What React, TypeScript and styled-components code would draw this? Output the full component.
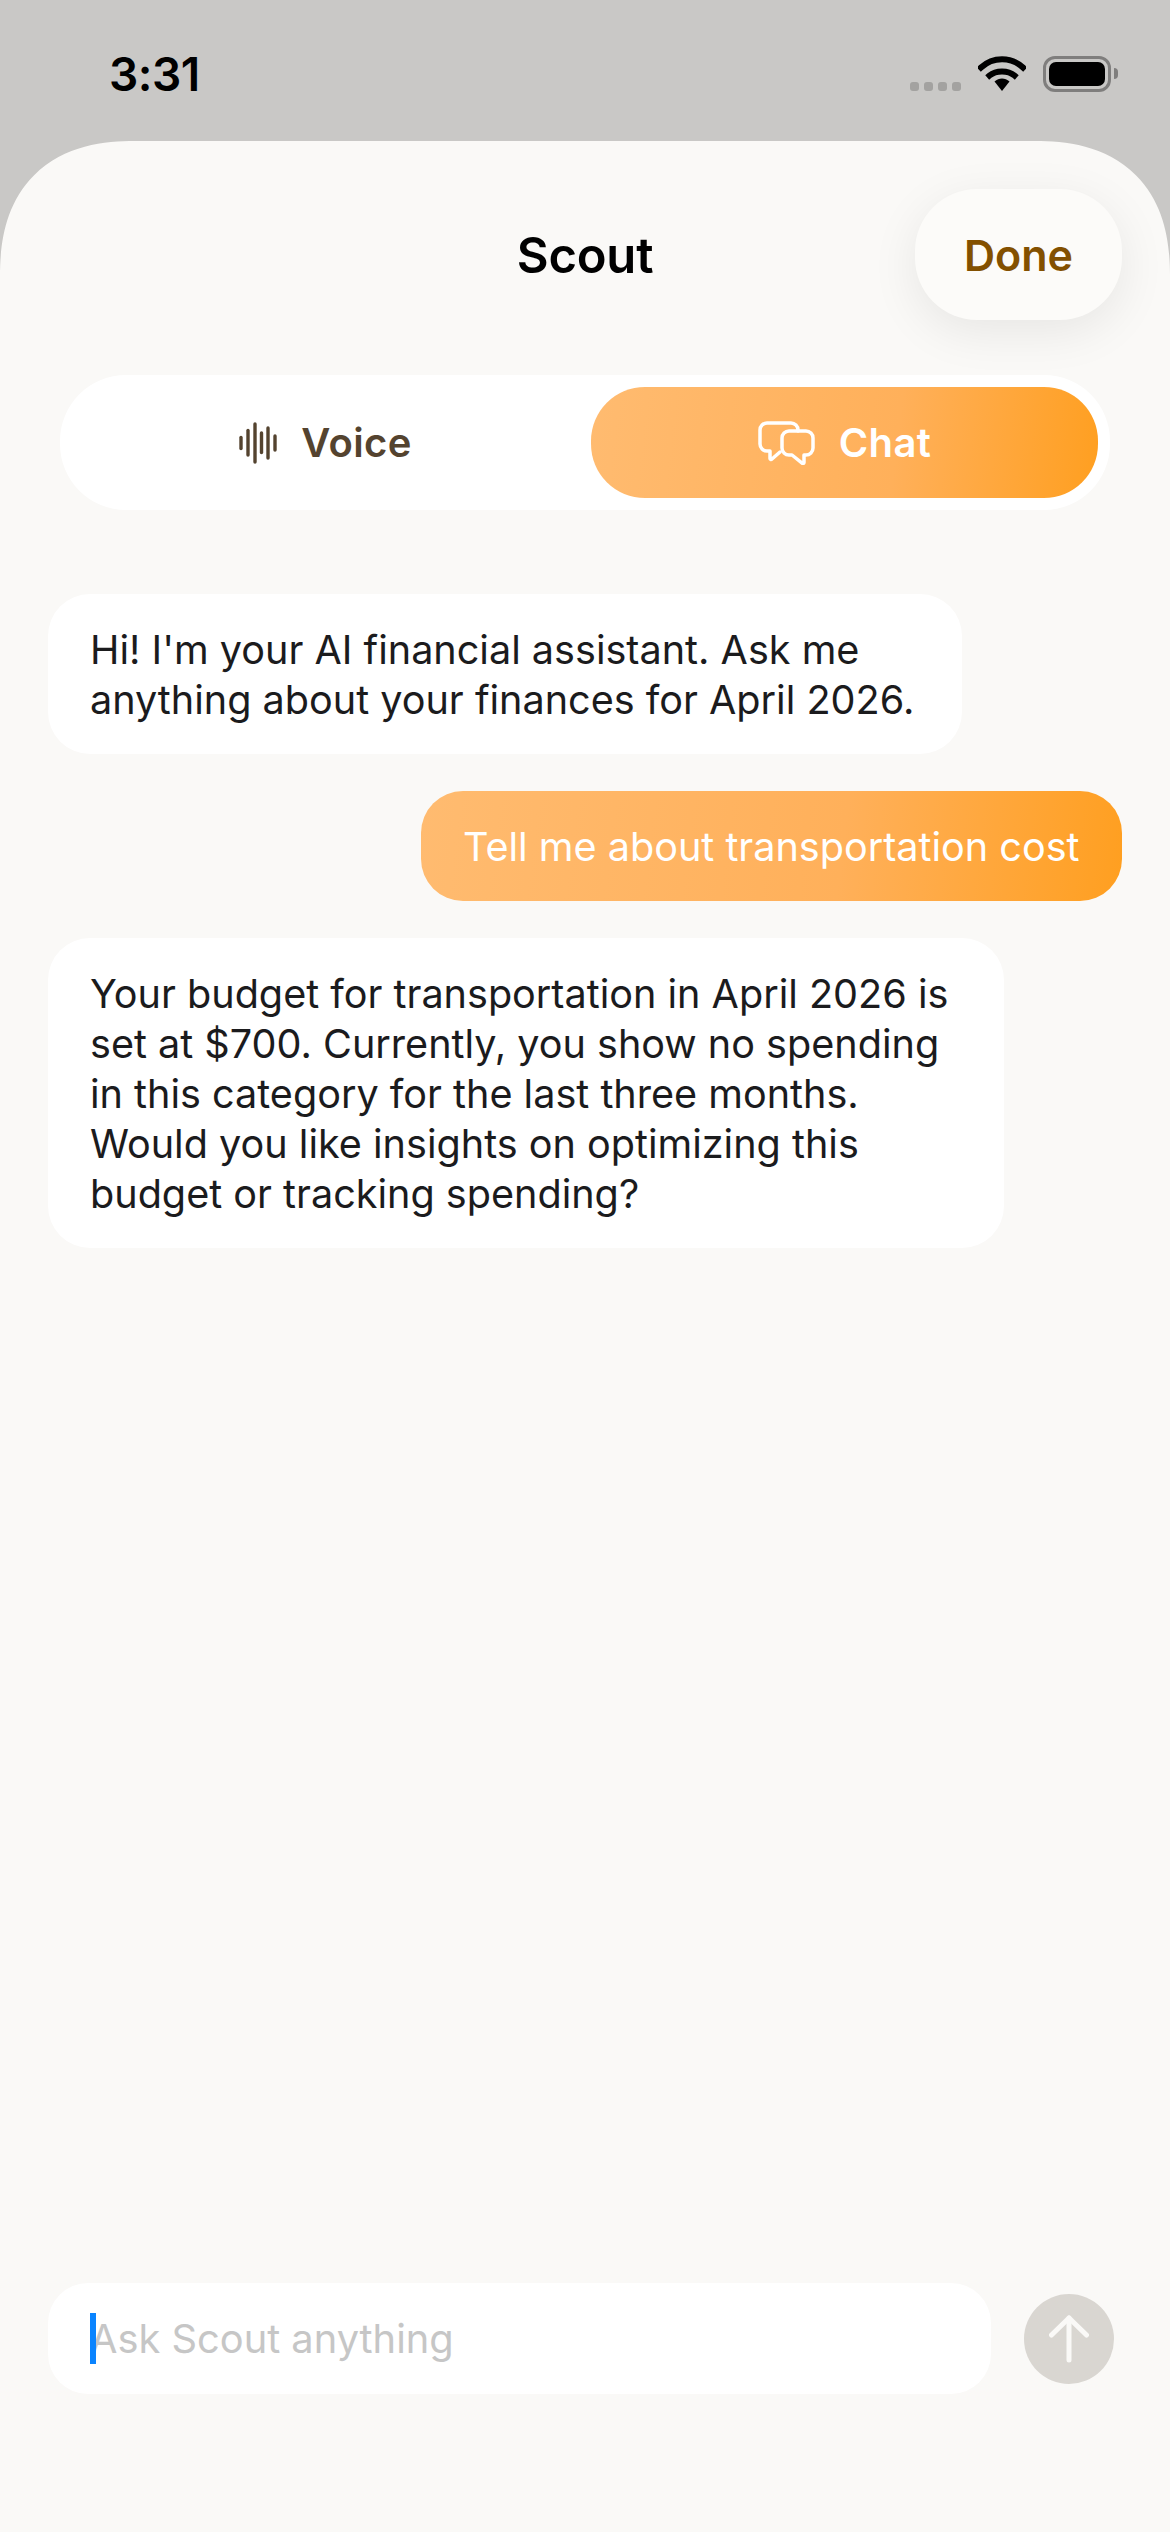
import styled, { createGlobalStyle } from 'styled-components';

const Colors = {
	page: '#faf9f7',
	statusBar: '#c9c8c6',
	text: '#1b1b1d',
	brown: '#54432f',
	done: '#835000',
	gradient: 'linear-gradient(97deg, #ffbb70 0%, #ffb05a 60%, #ff9f20 100%)',
} as const;

const FONT = 'Inter, "Noto Sans", sans-serif';

const GlobalStyle = createGlobalStyle`
	html, body {
		margin: 0;
		padding: 0;
		background: ${Colors.statusBar};
		font-family: ${FONT};
	}
`;

const Screen = styled.div`
	width: 1170px;
	height: 2532px;
	display: flex;
	flex-direction: column;
	background: ${Colors.statusBar};
	overflow: hidden;
`;

const StatusBar = styled.div`
	height: 141px;
	flex: none;
	box-sizing: border-box;
	padding: 49px 59px 0 109px;
	display: flex;
	align-items: flex-start;
	justify-content: space-between;
`;

const Time = styled.div`
	font-size: 46px;
	line-height: 50px;
	font-weight: 600;
	letter-spacing: -0.5px;
	color: #000;
`;

const StatusIcons = styled.div`
	display: flex;
	align-items: flex-start;
	margin-top: 6px;
`;

const Dots = styled.div`
	display: flex;
	gap: 5px;
	margin: 27px 17px 0 0;
`;

const Dot = styled.span`
	width: 9px;
	height: 9px;
	border-radius: 3px;
	background: #a3a2a0;
`;

const Battery = styled.div`
	width: 68px;
	height: 36px;
	margin: 1px 0 0 17px;
	box-sizing: border-box;
	border: 3px solid #7f7e7d;
	border-radius: 12px;
	padding: 3px;
	position: relative;

	&::after {
		content: '';
		position: absolute;
		right: -10px;
		top: 9px;
		width: 4px;
		height: 11px;
		border-radius: 0 6px 6px 0;
		background: #7f7e7d;
	}
`;

const BatteryFill = styled.div`
	height: 100%;
	background: #000;
	border-radius: 7px;
`;

const Sheet = styled.div`
	flex: 1;
	display: flex;
	flex-direction: column;
	background: ${Colors.page};
	border-radius: 135px 135px 0 0;
	corner-shape: superellipse(1.25);
	padding: 48px 48px 138px;
`;

const Header = styled.header`
	display: grid;
	grid-template-columns: 1fr auto 1fr;
	align-items: center;
`;

const Title = styled.h1`
	grid-column: 2;
	margin: 0;
	padding-top: 2px;
	font-size: 49px;
	font-weight: 600;
	letter-spacing: -0.2px;
	color: #000;
`;

const DoneButton = styled.button`
	grid-column: 3;
	justify-self: end;
	width: 207px;
	height: 131px;
	padding: 0;
	border: 0;
	border-radius: 62px;
	background: #fcfbf9;
	box-shadow: 0 12px 48px rgba(0, 0, 0, 0.08);
	font-family: ${FONT};
	font-size: 43px;
	font-weight: 600;
	color: ${Colors.done};
`;

const Segment = styled.div`
	margin: 55px 12px 0;
	height: 135px;
	box-sizing: border-box;
	padding: 12px;
	display: grid;
	grid-template-columns: 507px 507px;
	gap: 12px;
	background: #fff;
	border-radius: 66px;
`;

const SegmentTab = styled.div<{ $active?: boolean }>`
	display: flex;
	align-items: center;
	justify-content: center;
	gap: 24px;
	border-radius: 54px;
	font-size: 40px;
	font-weight: 600;
	letter-spacing: 0.4px;
	color: ${({ $active }) => ($active ? '#fff' : Colors.brown)};
	background: ${({ $active }) => ($active ? Colors.gradient : 'none')};
`;

const Messages = styled.div`
	margin-top: 84px;
	display: flex;
	flex-direction: column;
	gap: 37px;
`;

const Bubble = styled.div<{ $mine?: boolean; $width?: number }>`
	align-self: ${({ $mine }) => ($mine ? 'flex-end' : 'flex-start')};
	width: ${({ $width }) => ($width ? `${$width}px` : 'auto')};
	box-sizing: border-box;
	padding: 31px 44px 29px 42px;
	border-radius: 42px;
	font-size: 39.6px;
	line-height: 50px;
	white-space: pre;
	color: ${({ $mine }) => ($mine ? '#fff' : Colors.text)};
	background: ${({ $mine }) => ($mine ? Colors.gradient : '#fff')};
`;

const Composer = styled.div`
	margin-top: auto;
	display: flex;
	align-items: center;
	gap: 33px;
	padding-right: 8px;
`;

const Field = styled.div`
	position: relative;
	flex: 1;
	height: 111px;
	box-sizing: border-box;
	padding-left: 42px;
	display: flex;
	align-items: center;
	background: #fff;
	border-radius: 40px;
	font-size: 39.8px;
	color: #c6c6c6;
`;

const Caret = styled.span`
	position: absolute;
	left: 42px;
	top: 30px;
	width: 6px;
	height: 51px;
	background: #0a84ff;
`;

const SendButton = styled.button`
	flex: none;
	width: 90px;
	height: 90px;
	padding: 0;
	border: 0;
	border-radius: 50%;
	display: flex;
	align-items: center;
	justify-content: center;
	background: #d9d6d1;
`;

const Wifi = () => (
	<svg width="48" height="36" viewBox="0 0 48 36">
		<path d="M3 12.5C15 1.5 33 1.5 45 12.5" fill="none" stroke="#000" strokeWidth="6" strokeLinecap="square" />
		<path d="M11.5 20.5C18 15 30 15 36.5 20.5" fill="none" stroke="#000" strokeWidth="6" strokeLinecap="square" />
		<path d="M16.5 26.5C21 22.5 27 22.5 31.5 26.5L24 36Z" fill="#000" />
	</svg>
);

const Waveform = () => (
	<svg width="38" height="42" viewBox="0 0 38 42" fill="none" stroke={Colors.brown} strokeWidth="3.4" strokeLinecap="round">
		<path d="M2 15.5V26.5" />
		<path d="M9 8.5V33" />
		<path d="M16 2V40" />
		<path d="M22.5 11V30.5" />
		<path d="M29 6V36" />
		<path d="M36 14V28" />
	</svg>
);

const ChatBubbles = () => (
	<svg width="57" height="44" viewBox="0 0 57 44" fill="none" stroke="#fff" strokeWidth="3.5" strokeLinecap="round" strokeLinejoin="round">
		<path d="M40 10V9a7 7 0 0 0-7-7H9a7 7 0 0 0-7 7v14a7 7 0 0 0 7 7h3v7.5a1 1 0 0 0 1.7.7L22 31" />
		<path d="M31 10h17a7 7 0 0 1 7 7v10a7 7 0 0 1-7 7h-2v7.5a1 1 0 0 1-1.6.8L34 34h-3a7 7 0 0 1-7-7V17a7 7 0 0 1 7-7z" />
	</svg>
);

const ArrowUp = () => (
	<svg width="40" height="48" viewBox="0 0 40 48" fill="none" stroke={Colors.page} strokeWidth="5" strokeLinecap="round" strokeLinejoin="round">
		<path d="M20 45V3" />
		<path d="M2.5 20L20 3l17.5 17" />
	</svg>
);

export default function App() {
	return (
		<>
			<GlobalStyle />
			<Screen>
				<StatusBar>
					<Time>3:31</Time>
					<StatusIcons>
						<Dots>
							<Dot />
							<Dot />
							<Dot />
							<Dot />
						</Dots>
						<Wifi />
						<Battery>
							<BatteryFill />
						</Battery>
					</StatusIcons>
				</StatusBar>
				<Sheet>
					<Header>
						<Title>Scout</Title>
						<DoneButton>Done</DoneButton>
					</Header>
					<Segment>
						<SegmentTab>
							<Waveform />
							Voice
						</SegmentTab>
						<SegmentTab $active>
							<ChatBubbles />
							Chat
						</SegmentTab>
					</Segment>
					<Messages>
						<Bubble $width={914}>{"Hi! I'm your AI financial assistant. Ask me\nanything about your finances for April 2026."}</Bubble>
						<Bubble $mine $width={701}>Tell me about transportation cost</Bubble>
						<Bubble $width={956}>
							{'Your budget for transportation in April 2026 is\nset at $700. Currently, you show no spending\nin this category for the last three months.\nWould you like insights on optimizing this\nbudget or tracking spending?'}
						</Bubble>
					</Messages>
					<Composer>
						<Field>
							<Caret />
							Ask Scout anything
						</Field>
						<SendButton>
							<ArrowUp />
						</SendButton>
					</Composer>
				</Sheet>
			</Screen>
		</>
	);
}
